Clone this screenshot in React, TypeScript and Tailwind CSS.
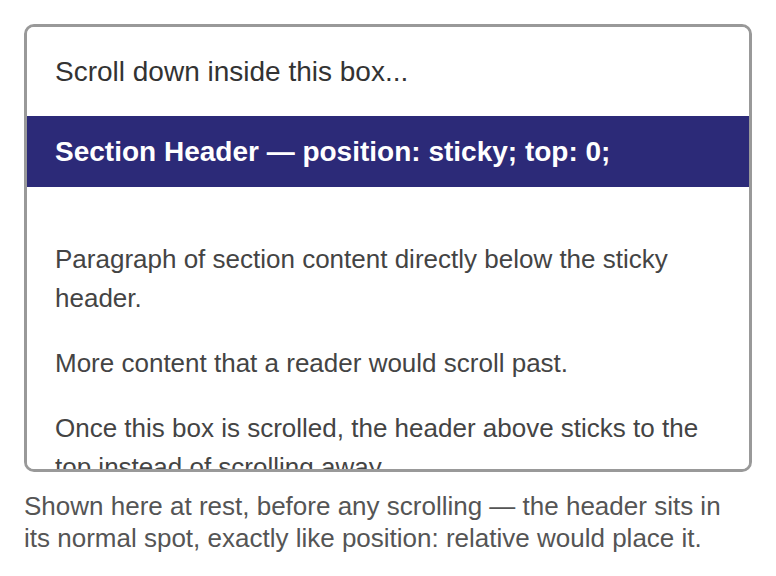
import * as React from "react";

const paragraphs = [
	"Paragraph of section content directly below the sticky header.",
	"More content that a reader would scroll past.",
	"Once this box is scrolled, the header above sticks to the top instead of scrolling away.",
	"Keep scrolling and the header stays pinned while the text moves under it.",
	"The end of the section.",
];

const App = () => {
	return (
		<div className="p-6 font-['Liberation_Sans',Arial,sans-serif] bg-white">
			<div className="h-[448px] overflow-y-auto [scrollbar-width:none] border-[3px] border-[#999] rounded-[10px] bg-white">
				<p className="px-7 pt-[25px] mb-[25px] text-[28px] leading-[1.4] text-[#333]">
					Scroll down inside this box...
				</p>
				<h2 className="sticky top-0 bg-[#2c2a78] text-white font-bold text-[28px] leading-[1.4] px-7 py-4">
					Section Header — position: sticky; top: 0;
				</h2>
				<div className="px-7 pt-[53px] pb-7 flex flex-col gap-[26px]">
					{paragraphs.map((text) => (
						<p key={text} className="text-[26px] leading-[39px] text-[#444]">
							{text}
						</p>
					))}
				</div>
			</div>
			<p className="mt-[19px] text-[26px] leading-[1.22] text-[#555]">
				Shown here at rest, before any scrolling — the header sits in its normal spot, exactly like position: relative would place it.
			</p>
		</div>
	);
};

export default App;
